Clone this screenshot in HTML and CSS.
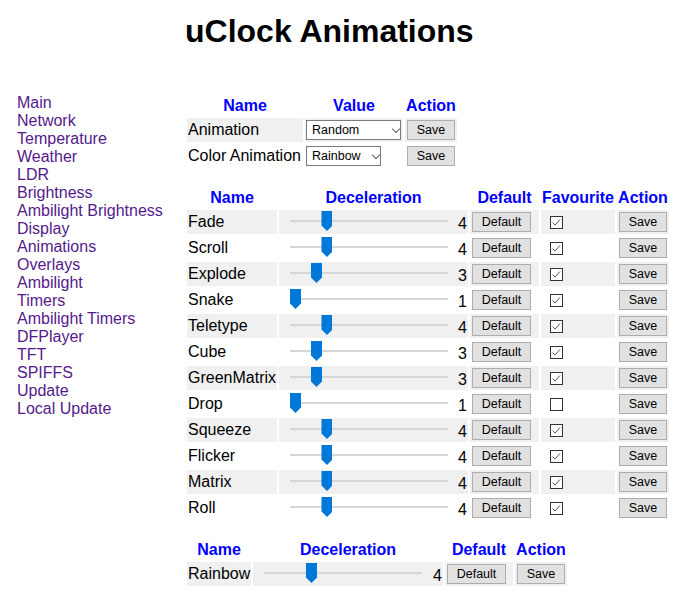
FILE: index.html
```html
<!DOCTYPE html>
<html>
<head>
<meta charset="utf-8">
<title>uClock Animations</title>
<link rel="stylesheet" href="styles.css">
</head>
<body>
<div class="page">
  <nav class="nav">
    <a href="#">Main</a>
    <a href="#">Network</a>
    <a href="#">Temperature</a>
    <a href="#">Weather</a>
    <a href="#">LDR</a>
    <a href="#">Brightness</a>
    <a href="#">Ambilight Brightness</a>
    <a href="#">Display</a>
    <a href="#">Animations</a>
    <a href="#">Overlays</a>
    <a href="#">Ambilight</a>
    <a href="#">Timers</a>
    <a href="#">Ambilight Timers</a>
    <a href="#">DFPlayer</a>
    <a href="#">TFT</a>
    <a href="#">SPIFFS</a>
    <a href="#">Update</a>
    <a href="#">Local Update</a>
  </nav>
  <main class="content">
    <h1 class="title">uClock Animations</h1>

    <table class="grid t1">
      <thead>
        <tr><th class="c-name1">Name</th><th class="c-value">Value</th><th class="c-action">Action</th></tr>
      </thead>
      <tbody>
        <tr>
          <td>Animation</td>
          <td><span class="sel"><select class="select w95"><option>Random</option></select></span></td>
          <td><button class="btn save">Save</button></td>
        </tr>
        <tr>
          <td>Color Animation</td>
          <td><span class="sel"><select class="select w75"><option>Rainbow</option></select></span></td>
          <td><button class="btn save">Save</button></td>
        </tr>
      </tbody>
    </table>

    <table class="grid t2">
      <thead>
        <tr><th class="c-name2">Name</th><th class="c-slider">Deceleration</th><th class="c-default">Default</th><th class="c-fav">Favourite</th><th class="c-action">Action</th></tr>
      </thead>
      <tbody id="anims"></tbody>
    </table>

    <table class="grid t3">
      <thead>
        <tr><th class="c-name3">Name</th><th class="c-slider3">Deceleration</th><th class="c-default3">Default</th><th class="c-action">Action</th></tr>
      </thead>
      <tbody>
        <tr>
          <td>Rainbow</td>
          <td><div class="slide"><input type="range" class="range" min="0" max="14" value="4"><span class="val">4</span></div></td>
          <td><button class="btn def">Default</button></td>
          <td><button class="btn save">Save</button></td>
        </tr>
      </tbody>
    </table>
  </main>
</div>
<script src="app.js"></script>
</body>
</html>
```

FILE: app.js
```js
var rows = [
  ["Fade", 4, true], ["Scroll", 4, true], ["Explode", 3, true], ["Snake", 1, true],
  ["Teletype", 4, true], ["Cube", 3, true], ["GreenMatrix", 3, true], ["Drop", 1, false],
  ["Squeeze", 4, true], ["Flicker", 4, true], ["Matrix", 4, true], ["Roll", 4, true]
];
var tb = document.getElementById("anims");
var html = "";
rows.forEach(function (r) {
  var check = r[2] ? '<polyline points="2.5,6.5 5,9 10,3.5" fill="none" stroke="#555" stroke-width="1"/>' : '';
  html += '<tr>' +
    '<td>' + r[0] + '</td>' +
    '<td><div class="slide"><input type="range" class="range" min="1" max="15" value="' + r[1] + '"><span class="val">' + r[1] + '</span></div></td>' +
    '<td><button class="btn def">Default</button></td>' +
    '<td class="fav"><svg class="chk" width="13" height="13" viewBox="0 0 13 13"><rect x="0.5" y="0.5" width="12" height="12" fill="#fff" stroke="#333"/>' + check + '</svg></td>' +
    '<td><button class="btn save">Save</button></td>' +
    '</tr>';
});
tb.innerHTML = html;
```

FILE: styles.css
```css
body {
  margin: 8px;
  font-family: "Liberation Sans", Arial, sans-serif;
  font-size: 16px;
  color: #000;
  background: #fff;
}

.page {
  display: flex;
  align-items: flex-start;
}

.nav {
  width: 177px;
  flex: none;
  padding: 86px 0 0 9px;
  box-sizing: border-box;
  display: flex;
  flex-direction: column;
  align-items: flex-start;
}

.nav a {
  color: #551a8b;
  text-decoration: none;
  line-height: 18px;
  font-size: 16px;
}

.content {
  display: flex;
  flex-direction: column;
  align-items: flex-start;
}

.title {
  font-size: 32px;
  line-height: 37px;
  font-weight: bold;
  margin: 5px 0 44px 0;
}

.grid {
  border-collapse: separate;
  border-spacing: 2px;
  table-layout: fixed;
  margin-bottom: 16px;
}

.grid th,
.grid td {
  box-sizing: border-box;
  padding: 1px;
  line-height: 18px;
  font-size: 16px;
}

.grid th {
  color: #0000ff;
  font-weight: bold;
  text-align: center;
  height: 20px;
}

.grid td {
  height: 24px;
  text-align: left;
  vertical-align: middle;
  white-space: nowrap;
}

.grid tbody tr:nth-child(odd) td {
  background: #f0f0f0;
}

.t1 { width: 274px; }
.c-name1 { width: 116px; }
.c-value { width: 98px; }
.c-action { width: 52px; }

.t2 { width: 486px; }
.c-name2 { width: 90px; }
.c-slider { width: 189px; }
.c-default { width: 69px; }
.c-fav { width: 74px; }

.t3 { width: 384px; }
.c-name3 { width: 64px; }
.c-slider3 { width: 190px; }
.c-default3 { width: 68px; }

.sel {
  position: relative;
  display: block;
}

.sel::after {
  content: "";
  position: absolute;
  top: 6px;
  width: 5px;
  height: 5px;
  border-right: 1px solid #606060;
  border-bottom: 1px solid #606060;
  transform: rotate(45deg);
  pointer-events: none;
}

.select {
  -webkit-appearance: none;
  appearance: none;
  display: block;
  box-sizing: border-box;
  height: 20px;
  margin: 0;
  padding: 0 0 0 5px;
  border: 1px solid #7a7a7a;
  border-radius: 0;
  background: #fff;
  color: #000;
  font-family: "Liberation Sans", Arial, sans-serif;
  font-size: 12.5px;
}

.w95 { width: 95px; }
.w75 { width: 75px; }
.sel:has(.w95)::after { left: 87px; }
.sel:has(.w75)::after { left: 67px; }

.btn {
  display: block;
  box-sizing: border-box;
  height: 20px;
  margin: 0 0 0 1px;
  padding: 0;
  border: 1px solid #adadad;
  border-radius: 0;
  background: #e1e1e1;
  color: #000;
  font-family: "Liberation Sans", Arial, sans-serif;
  font-size: 12.5px;
  line-height: 18px;
  text-align: center;
}

.save { width: 48px; }
.def { width: 59px; }

.slide {
  display: flex;
  align-items: flex-start;
  height: 22px;
}

.range {
  -webkit-appearance: none;
  appearance: none;
  width: 158px;
  height: 20px;
  margin: 0 0 0 10px;
  padding: 0;
  background: transparent;
  flex: none;
}

.range::-webkit-slider-runnable-track {
  height: 2px;
  background: #d6d6d6;
  border: 0;
}

.range::-webkit-slider-thumb {
  -webkit-appearance: none;
  appearance: none;
  width: 11px;
  height: 20px;
  margin-top: -9px;
  background: #0078d7;
  border: 0;
  clip-path: polygon(0 0, 100% 0, 100% 72%, 50% 100%, 0 72%);
}

.val {
  flex: 1;
  align-self: flex-end;
  text-align: right;
  line-height: 18px;
  font-size: 16px;
}

.grid td.fav {
  vertical-align: top;
}

.chk {
  display: block;
  margin: 5px 0 0 8px;
}
```
